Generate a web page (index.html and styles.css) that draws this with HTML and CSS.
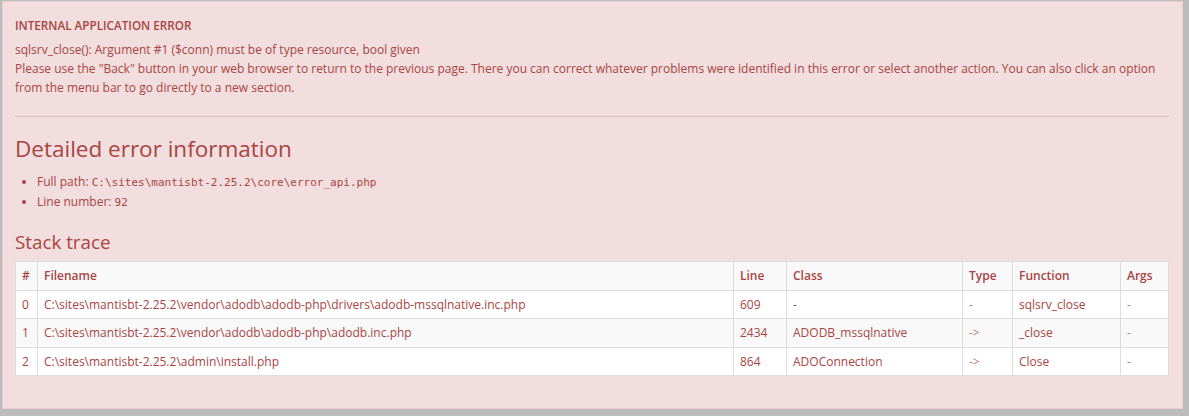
FILE: index.html
```html
<!DOCTYPE html>
<html>
<head>
<meta charset="utf-8">
<link rel="stylesheet" href="styles.css">
</head>
<body>
<div class="page">
  <div class="alert">
    <p class="title">INTERNAL APPLICATION ERROR</p>
    <p class="msg">sqlsrv_close(): Argument #1 ($conn) must be of type resource, bool given</p>
    <p class="msg">Please use the "Back" button in your web browser to return to the previous page. There you can correct whatever problems were identified in this error or select another action. You can also click an option from the menu bar to go directly to a new section.</p>
    <hr class="sep">
    <h2 class="h2">Detailed error information</h2>
    <ul class="info">
      <li>Full path: <span class="mono">C:\sites\mantisbt-2.25.2\core\error_api.php</span></li>
      <li>Line number: <span class="mono">92</span></li>
    </ul>
    <h3 class="h3">Stack trace</h3>
    <table class="trace">
      <colgroup>
        <col class="c-num"><col class="c-file"><col class="c-line"><col class="c-class"><col class="c-type"><col class="c-func"><col class="c-args">
      </colgroup>
      <thead>
        <tr><th>#</th><th>Filename</th><th>Line</th><th>Class</th><th>Type</th><th>Function</th><th>Args</th></tr>
      </thead>
      <tbody>
        <tr><td>0</td><td>C:\sites\mantisbt-2.25.2\vendor\adodb\adodb-php\drivers\adodb-mssqlnative.inc.php</td><td>609</td><td>-</td><td class="dim">-</td><td>sqlsrv_close</td><td class="dim">-</td></tr>
        <tr class="alt"><td>1</td><td>C:\sites\mantisbt-2.25.2\vendor\adodb\adodb-php\adodb.inc.php</td><td>2434</td><td>ADODB_mssqlnative</td><td class="dim">-&gt;</td><td>_close</td><td class="dim">-</td></tr>
        <tr><td>2</td><td>C:\sites\mantisbt-2.25.2\admin\install.php</td><td>864</td><td>ADOConnection</td><td class="dim">-&gt;</td><td>Close</td><td class="dim">-</td></tr>
      </tbody>
    </table>
  </div>
</div>
</body>
</html>
```

FILE: styles.css
```css
html, body {
  margin: 0;
  padding: 0;
  background: #bcbcbc;
  height: 100%;
}
body {
  font-family: "Open Sans", "Noto Sans", sans-serif;
  font-size: 12px;
  line-height: 19px;
  color: #a94442;
}
.page {
  padding: 1px 6px 7px 2px;
}
.alert {
  box-sizing: border-box;
  height: 408px;
  background: #f2dede;
  border: 1px solid #ebccd1;
  padding: 14px 13px 12px 12px;
}
.title {
  margin: 0 0 5px 0;
  font-weight: 600;
  font-size: 11.7px;
  color: #a94442;
}
.msg {
  margin: 0;
}
.sep {
  border: 0;
  border-top: 1px solid #e4b9c0;
  margin: 19px 0 0 0;
  height: 0;
}
.h2 {
  font-size: 22.5px;
  font-weight: 400;
  line-height: 26px;
  margin: 19px 0 10px 0;
}
.info {
  margin: 0;
  padding-left: 22px;
}
.mono {
  font-family: "DejaVu Sans Mono", "Liberation Mono", monospace;
  font-size: 11px;
}
.h3 {
  font-size: 18.8px;
  font-weight: 400;
  line-height: 22px;
  margin: 19px 0 8px 0;
}
.trace {
  width: 100%;
  border-collapse: collapse;
  table-layout: fixed;
  background: #fff;
}
.c-num { width: 22px; }
.c-line { width: 53px; }
.c-class { width: 176px; }
.c-type { width: 50px; }
.c-func { width: 108px; }
.c-args { width: 48px; }
.trace th, .trace td {
  border: 1px solid #ddd;
  padding: 4px 6px;
  line-height: 19.5px;
  text-align: left;
  white-space: nowrap;
  overflow: hidden;
}
.trace th {
  font-weight: 600;
  background: #f9f9f9;
}
.trace tr.alt td {
  background: #f9f9f9;
}
.trace td.dim {
  color: #c27a78;
}
```
